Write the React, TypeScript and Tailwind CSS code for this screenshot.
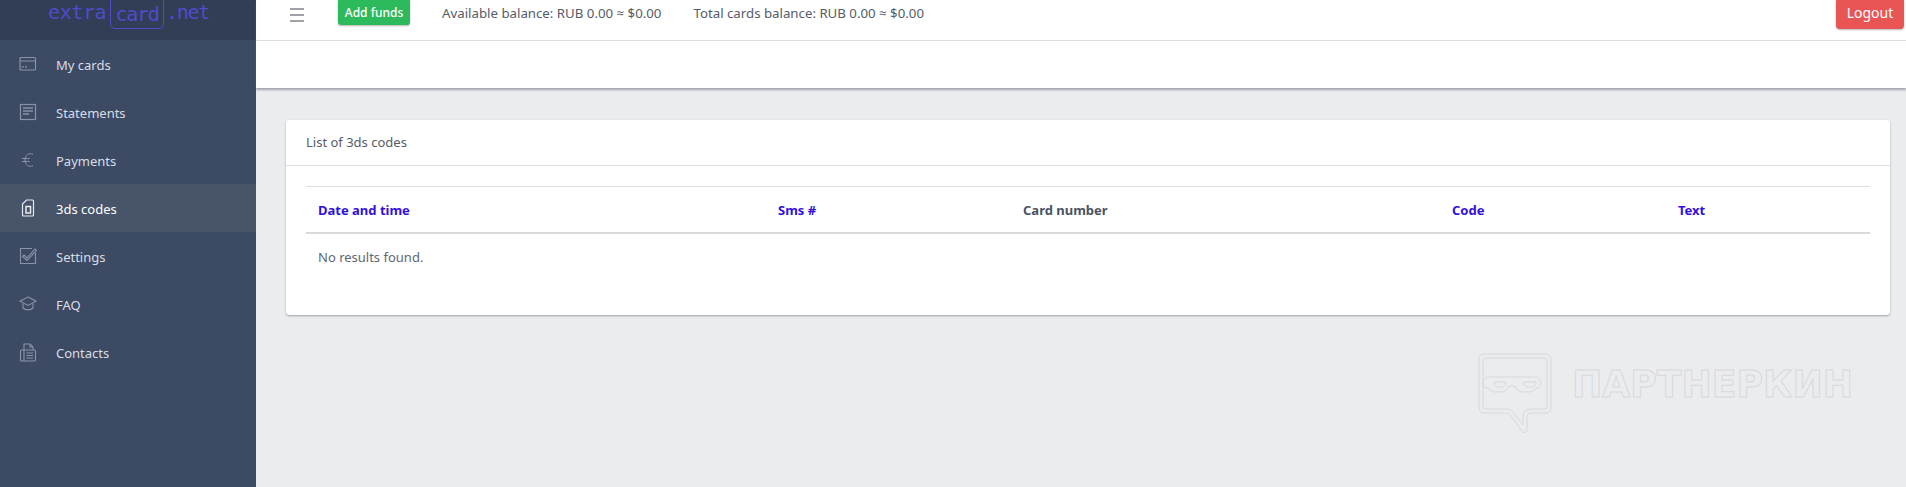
const font = "[font-family:'Noto_Sans','Open_Sans',sans-serif]";

function IconCard() {
  return (
    <svg width="18" height="16" viewBox="0 0 18 16" fill="none" stroke="currentColor" strokeWidth="1.2">
      <rect x="1" y="1.500" width="15.500" height="12.500" rx="1" />
      <path d="M1 5h15.500M2.500 10.800h2.400M6 10.800h2" />
    </svg>
  );
}

function IconDoc() {
  return (
    <svg width="18" height="18" viewBox="0 0 18 18" fill="none" stroke="currentColor" strokeWidth="1.2">
      <rect x="1.500" y="1.500" width="15" height="15" />
      <path d="M4 5h10M4 8h10M4 11h6" strokeWidth="1.400" />
    </svg>
  );
}

function IconEuro() {
  return (
    <svg width="18" height="18" viewBox="0 0 18 18" fill="none" stroke="currentColor" strokeWidth="1">
      <path d="M14 3.200C10 1.600 6 3.800 6 9s4 7.400 8 5.800M3 7.500h7.500M3 10.500h7.500" />
    </svg>
  );
}

function IconSim() {
  return (
    <svg width="18" height="18" viewBox="0 0 18 18" fill="none" stroke="currentColor" strokeWidth="1.200">
      <path d="M7.500 1h6a1 1 0 0 1 1 1v14a1 1 0 0 1-1 1h-9a1 1 0 0 1-1-1V5z" />
      <rect x="7" y="7.500" width="4.500" height="6.500" strokeWidth="1.500" />
    </svg>
  );
}

function IconCheck() {
  return (
    <svg width="18" height="18" viewBox="0 0 18 18" fill="none" stroke="currentColor" strokeWidth="1.100">
      <path d="M13 1.500H1.500v15h15V6" />
      <path d="M5 8l3 3 8-9 1.500 1.500L8 13.500 3.500 9.500z" />
    </svg>
  );
}

function IconCap() {
  return (
    <svg width="18" height="16" viewBox="0 0 18 16" fill="none" stroke="currentColor" strokeWidth="1.100">
      <path d="M9 1l8 4.200-8 4.200-8-4.200z" />
      <path d="M4 7.500v4.500c2.500 2.500 7.500 2.500 10 0V7.500" />
    </svg>
  );
}

function IconFax() {
  return (
    <svg width="18" height="19" viewBox="0 0 18 19" fill="none" stroke="currentColor" strokeWidth="1.100">
      <path d="M5 7V1h6l3 3v3" />
      <path d="M11 1v3h3" />
      <rect x="1.500" y="7" width="15" height="11" rx="1" />
      <path d="M5 7v11M7.500 10h6.500M7.500 12.500h6.500M7.500 15h6.500" />
    </svg>
  );
}

function Watermark() {
  return (
    <svg width="380" height="82" viewBox="0 0 380 82" fill="none" stroke="#d7d8dc" strokeWidth="1">
      <path d="M6 1h62a5 5 0 0 1 5 5v49a5 5 0 0 1-5 5H53a4 4 0 0 0-4 4v13a2.500 2.500 0 0 1-4.500 1.500L33 63a7 7 0 0 0-5-3H6a5 5 0 0 1-5-5V6a5 5 0 0 1 5-5z" />
      <path d="M8 5h58a3 3 0 0 1 3 3v46a2 2 0 0 1-2 2H52a7 7 0 0 0-7 7v9L36 60a9 9 0 0 0-7-4H8a3 3 0 0 1-3-3V8a3 3 0 0 1 3-3z" />
      <path d="M17 24h40a6 6 0 0 1 6 6v1a5 5 0 0 1-5 4a10 10 0 0 1-9 4h-4a9 9 0 0 1-8-6h-6a9 9 0 0 1-8 6h-4a10 10 0 0 1-9-4a5 5 0 0 1-5-4v-1a6 6 0 0 1 6-6z" />
      <path d="M16 29h12c0 4-2 5-6 5s-6-1-6-5zM46 29h12c0 4-2 5-6 5s-6-1-6-5z" />
      <text
        x="94"
        y="44"
        fontFamily="'DejaVu Sans', sans-serif"
        fontWeight="700"
        fontSize="38"
        textLength="281"
        lengthAdjust="spacingAndGlyphs"
      >
        ПАРТНЕРКИН
      </text>
    </svg>
  );
}

const items = [
  { label: "My cards", icon: <IconCard /> },
  { label: "Statements", icon: <IconDoc /> },
  { label: "Payments", icon: <IconEuro /> },
  { label: "3ds codes", icon: <IconSim />, active: true },
  { label: "Settings", icon: <IconCheck /> },
  { label: "FAQ", icon: <IconCap /> },
  { label: "Contacts", icon: <IconFax /> },
];

function Sidebar() {
  return (
    <aside className="w-[256px] shrink-0 bg-[#3c4a63]">
      <div className="flex h-[40px] items-start overflow-hidden bg-[#323d56] pl-[48px] text-[#4f4bcb]">
        <div className="flex items-start font-['DejaVu_Sans_Mono',monospace] text-[20px] leading-[25px] tracking-[-1.3px]">
          <span className="w-[62px] tracking-[-0.4px]">extra</span>
          <span className="mt-[-6px] flex h-[35px] w-[54px] items-center justify-center rounded-[5px] border-[1.5px] border-[#4f4bcb] pt-[6px]">
            card
          </span>
          <span className="ml-[2px]">.net</span>
        </div>
      </div>
      <nav>
        {items.map((item) => (
          <div
            key={item.label}
            className={`flex h-[48px] items-center text-[13px] ${item.active ? "bg-[#475469] text-white" : "text-[#d8dde6]"}`}
          >
            <span className={`ml-[19px] flex w-[37px] ${item.active ? "text-[#e8eaee]" : "text-[#8993a5]"}`}>{item.icon}</span>
            <span className="mt-[3px]">{item.label}</span>
          </div>
        ))}
      </nav>
    </aside>
  );
}

function TopBar() {
  return (
    <header className="bg-white shadow-[0_2px_2px_rgba(100,105,120,0.55)]">
      <div className="flex h-[41px] items-start border-b border-[#dcdde0] text-[13.25px] text-[#555c68]">
        <div className="ml-[34px] mt-[8px] flex w-[14px] flex-col gap-[4px]">
          <span className="h-[2px] bg-[#a0a2a8]" />
          <span className="h-[2px] bg-[#a0a2a8]" />
          <span className="h-[2px] bg-[#a0a2a8]" />
        </div>
        <button className="ml-[34px] flex h-[25px] w-[72px] items-end justify-center whitespace-nowrap rounded-b-[3px] bg-[#2dba5d] pb-[6px] text-[12px] font-medium leading-none text-white shadow-[0_1px_2px_rgba(0,0,0,0.3)]">
          Add funds
        </button>
        <span className="ml-[32px] mt-[4px] leading-[18px]">Available balance: RUB 0.00 ≈ $0.00</span>
        <span className="ml-[32px] mt-[4px] leading-[18px]">Total cards balance: RUB 0.00 ≈ $0.00</span>
        <button className="ml-auto mr-[2px] flex h-[29px] w-[68px] items-end justify-center rounded-b-[4px] bg-[#e95555] pb-[9px] text-[14px] leading-none text-white shadow-[0_1px_2px_rgba(0,0,0,0.3)]">
          Logout
        </button>
      </div>
      <div className="h-[47px]" />
    </header>
  );
}

function CodesCard() {
  const cols = [
    { label: "Date and time", w: "w-[460px]", link: true },
    { label: "Sms #", w: "w-[245px]", link: true },
    { label: "Card number", w: "w-[429px]", link: false },
    { label: "Code", w: "w-[226px]", link: true },
    { label: "Text", w: "", link: true },
  ];
  return (
    <section className="ml-[30px] mr-[16px] mt-[32px] h-[195px] rounded-[3px] bg-white shadow-[0_1px_2px_rgba(80,85,100,0.5)]">
      <div className="flex h-[46px] items-center border-b border-[#dcdde0] pl-[20px] text-[13px] text-[#555c68]">List of 3ds codes</div>
      <div className="mx-[20px] mt-[20px]">
        <table className="w-full table-fixed border-t border-[#dcdde0] text-[13px]">
          <thead>
            <tr className="h-[46px] border-b-2 border-[#d9dadd]">
              {cols.map((c) => (
                <th key={c.label} className={`${c.w} pl-[12px] pt-[2px] text-left font-bold ${c.link ? "text-[#3010dc]" : "text-[#4a5362]"}`}>
                  {c.label}
                </th>
              ))}
            </tr>
          </thead>
          <tbody>
            <tr>
              <td colSpan={5} className="pl-[12px] pt-[14px] leading-[18px] text-[#5f6672]">
                No results found.
              </td>
            </tr>
          </tbody>
        </table>
      </div>
    </section>
  );
}

export default function App() {
  return (
    <div className={`relative flex h-[487px] w-full overflow-hidden bg-[#ebecee] ${font}`}>
      <Sidebar />
      <main className="min-w-0 flex-1">
        <TopBar />
        <CodesCard />
      </main>
      <div className="absolute left-[1478px] top-[353px]">
        <Watermark />
      </div>
    </div>
  );
}
